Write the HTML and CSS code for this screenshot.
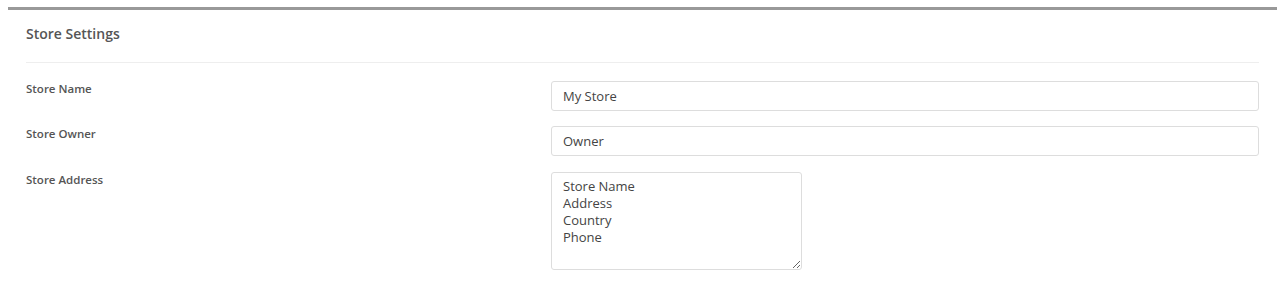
FILE: index.html
```html
<!DOCTYPE html>
<html lang="en">

<head>
    <meta charset="UTF-8">
    <meta name="viewport" content="width=device-width, initial-scale=1.0">
    <title>Store Settings</title>
    <link rel="stylesheet" href="styles.css">
</head>

<body>
    <div class="settings-panel">
        <div class="panel-header">
            <h3>Store Settings</h3>
        </div>
        <div class="panel-body">
            <div class="form-row">
                <label for="storeName">Store Name</label>
                <input type="text" id="storeName" class="form-input" value="My Store">
            </div>
            <div class="form-row">
                <label for="storeOwner">Store Owner</label>
                <input type="text" id="storeOwner" class="form-input" value="Owner">
            </div>
            <div class="form-row form-row-tall">
                <label for="storeAddress">Store Address</label>
                <textarea id="storeAddress" class="form-textarea">Store Name
Address
Country
Phone</textarea>
            </div>
        </div>
    </div>
</body>

</html>
```

FILE: styles.css
```css
body {
    margin: 7px 8px;
    font-family: "Open Sans", Arial, sans-serif;
    background-color: #fff;
}

.settings-panel {
    border-top: 3px solid #999;
    padding: 0 18px;
}

.panel-header {
    border-bottom: 1px solid #eee;
    padding: 13px 0 17px;
}

.panel-header h3 {
    margin: 0;
    font-size: 14px;
    font-weight: 600;
    color: #555;
    line-height: 22px;
}

.panel-body {
    padding-top: 18px;
}

.form-row {
    display: grid;
    grid-template-columns: 525px 1fr;
    align-items: start;
    margin-bottom: 15px;
}

.form-row-tall {
    padding-top: 1px;
}

.form-row label {
    font-size: 11.5px;
    font-weight: 600;
    color: #555;
    line-height: 15px;
}

.form-input,
.form-textarea {
    font-family: "Open Sans", Arial, sans-serif;
    font-size: 13px;
    color: #444;
    border: 1px solid #ddd;
    border-radius: 3px;
    padding: 6px 11px;
    box-sizing: border-box;
    outline: none;
}

.form-input {
    height: 30px;
    width: 100%;
}

.form-textarea {
    width: 251px;
    height: 98px;
    line-height: 17px;
    padding: 5px 11px;
    resize: both;
}
```
